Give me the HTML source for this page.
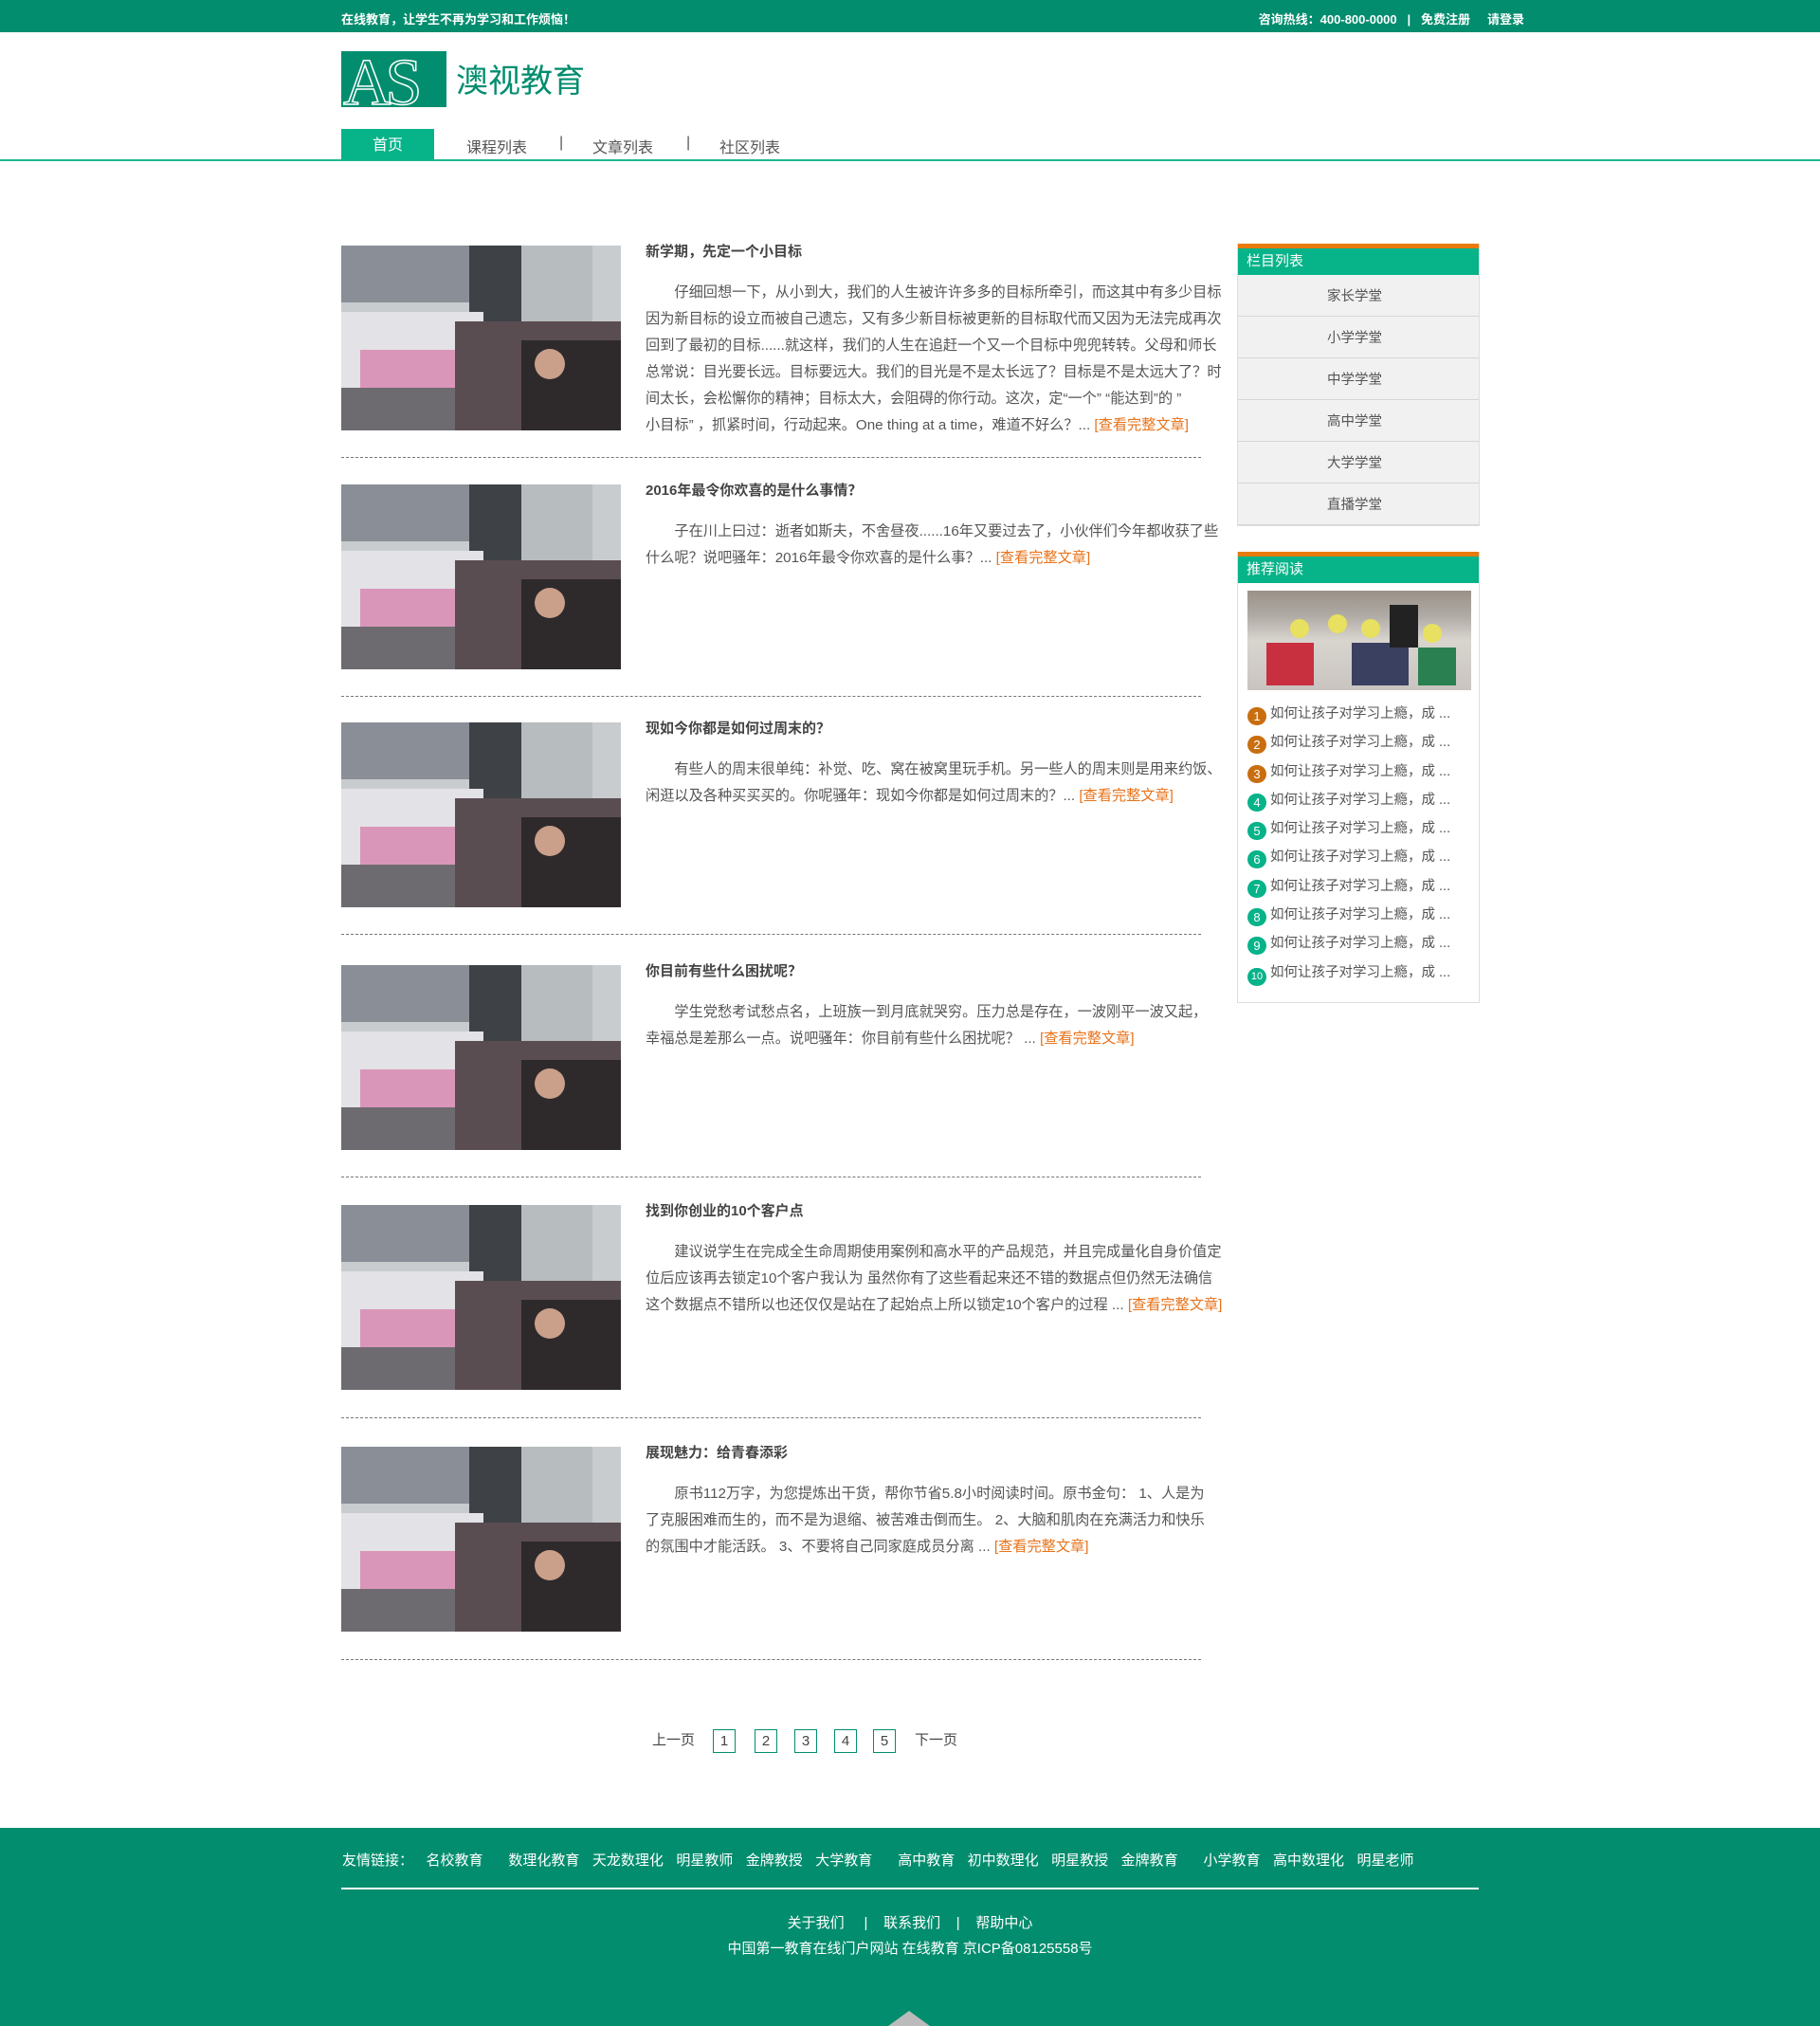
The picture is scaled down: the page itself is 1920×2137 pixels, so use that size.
<!DOCTYPE html>
<html><head><meta charset="utf-8">
<style>
*{margin:0;padding:0;box-sizing:border-box}
body{width:1920px;height:2137px;position:relative;background:#fff;font-family:"Liberation Sans","Noto Sans CJK SC",sans-serif;color:#555;overflow:hidden}
.top{position:absolute;left:0;top:0;width:1920px;height:34px;background:#028d6e;color:#fff;font-size:13px;font-weight:bold}
.top .l{position:absolute;left:360px;top:10px}
.top .r{position:absolute;right:312px;top:10px}
.logo{position:absolute;left:360px;top:54px;width:111px;height:59px;background:#028d6e;overflow:hidden}
.logo span{position:absolute;left:2px;top:-6px;font-family:"Liberation Serif",serif;font-size:70px;color:#028d6e;-webkit-text-stroke:1.5px #fff;letter-spacing:-6px}
.brand{position:absolute;left:481px;top:58px;font-size:34px;color:#028d6e}
.nav{position:absolute;left:0;top:168px;width:1920px;height:2px;background:#1db88d}
.nav1{position:absolute;left:360px;top:136px;width:98px;height:33px;background:#07b389;color:#fff;font-size:16px;text-align:center;line-height:36px}
.navi{position:absolute;top:142px;font-size:16px;color:#555}
.art{position:absolute;left:360px;width:925px}
.img{position:absolute;left:0;top:0;width:295px;height:195px;overflow:hidden}
.t{position:absolute;left:321px;top:-3px;font-size:15px;font-weight:bold;color:#444;line-height:20px}
.p{position:absolute;left:321px;top:36px;font-size:15.2px;line-height:28px;color:#555;white-space:nowrap}
.p a{color:#e8731a;text-decoration:none}
.dash{position:absolute;left:360px;width:907px;border-top:1px dashed #777}
.pg{position:absolute;top:1824px;font-size:15px;color:#444}
.pb{position:absolute;top:1824px;width:24px;height:25px;border:1px solid #028d6e;text-align:center;line-height:23px;font-size:15px;color:#444}
.sb{position:absolute;left:1305px;width:256px;border:1px solid #ddd;border-top:none}
.sbh{height:33px;background:#07b389;border-top:5px solid #e87b0c;color:#fff;font-size:15px;line-height:28px;padding-left:9px}
.it{height:44px;background:#f1f1f1;border-bottom:1px solid #d6d6d6;text-align:center;line-height:46px;font-size:14.5px;color:#555;text-indent:-8px}
.li{height:30.3px;font-size:14.5px;color:#555;line-height:30px;padding-left:10px;white-space:nowrap}
.n{display:inline-block;width:20px;height:19px;border-radius:10px;color:#fff;font-size:13px;line-height:19px;text-align:center;margin-right:4px;vertical-align:-3px}
.o{background:#c96e10}.g{background:#07b389}
.foot{position:absolute;left:0;top:1928px;width:1920px;height:209px;background:#028d6e;color:#fff;font-size:15px}
</style></head><body>
<div class="top"><span class="l">在线教育，让学生不再为学习和工作烦恼！</span><span class="r">咨询热线：400-800-0000 &nbsp;&nbsp;|&nbsp;&nbsp; 免费注册 &nbsp;&nbsp;&nbsp; 请登录</span></div>
<div class="logo"><span>AS</span></div>
<div class="brand">澳视教育</div>
<div class="nav"></div>
<div class="nav1">首页</div>
<div class="navi" style="left:492px">课程列表</div>
<div class="navi" style="left:590px">|</div>
<div class="navi" style="left:625px">文章列表</div>
<div class="navi" style="left:724px">|</div>
<div class="navi" style="left:759px">社区列表</div>

<svg width="0" height="0" style="position:absolute"><defs><g id="ph"><rect width="295" height="195" fill="#c9ccce"/><rect x="0" y="0" width="135" height="60" fill="#8a8e96"/><rect x="135" y="0" width="55" height="110" fill="#3e4246"/><rect x="190" y="0" width="75" height="110" fill="#b7bcbe"/><rect x="0" y="70" width="150" height="125" fill="#e3e2e6"/><rect x="0" y="150" width="295" height="45" fill="#6d6b70"/><rect x="120" y="80" width="175" height="115" fill="#5a4d52"/><rect x="190" y="100" width="105" height="95" fill="#2e2a2c"/><circle cx="220" cy="125" r="16" fill="#caa08a"/><rect x="20" y="110" width="100" height="40" fill="#d14a8a" opacity=".5"/></g></defs></svg>

<div class="art" style="top:259px"><div class="img"><svg width="295" height="195"><use href="#ph"/></svg></div><div class="t">新学期，先定一个小目标</div><div class="p">　　仔细回想一下，从小到大，我们的人生被许许多多的目标所牵引，而这其中有多少目标<br>因为新目标的设立而被自己遗忘，又有多少新目标被更新的目标取代而又因为无法完成再次<br>回到了最初的目标......就这样，我们的人生在追赶一个又一个目标中兜兜转转。父母和师长<br>总常说：目光要长远。目标要远大。我们的目光是不是太长远了？目标是不是太远大了？时<br>间太长，会松懈你的精神；目标太大，会阻碍的你行动。这次，定“一个” “能达到”的 ”<br>小目标” ，抓紧时间，行动起来。One thing at a time，难道不好么？... <a>[查看完整文章]</a></div></div>
<div class="dash" style="top:482px"></div>

<div class="art" style="top:511px"><div class="img"><svg width="295" height="195"><use href="#ph"/></svg></div><div class="t">2016年最令你欢喜的是什么事情？</div><div class="p">　　子在川上曰过：逝者如斯夫，不舍昼夜......16年又要过去了，小伙伴们今年都收获了些<br>什么呢？说吧骚年：2016年最令你欢喜的是什么事？... <a>[查看完整文章]</a></div></div>
<div class="dash" style="top:734px"></div>

<div class="art" style="top:762px"><div class="img"><svg width="295" height="195"><use href="#ph"/></svg></div><div class="t">现如今你都是如何过周末的？</div><div class="p">　　有些人的周末很单纯：补觉、吃、窝在被窝里玩手机。另一些人的周末则是用来约饭、<br>闲逛以及各种买买买的。你呢骚年：现如今你都是如何过周末的？... <a>[查看完整文章]</a></div></div>
<div class="dash" style="top:985px"></div>

<div class="art" style="top:1018px"><div class="img"><svg width="295" height="195"><use href="#ph"/></svg></div><div class="t">你目前有些什么困扰呢？</div><div class="p">　　学生党愁考试愁点名，上班族一到月底就哭穷。压力总是存在，一波刚平一波又起，<br>幸福总是差那么一点。说吧骚年：你目前有些什么困扰呢？ ... <a>[查看完整文章]</a></div></div>
<div class="dash" style="top:1241px"></div>

<div class="art" style="top:1271px"><div class="img"><svg width="295" height="195"><use href="#ph"/></svg></div><div class="t">找到你创业的10个客户点</div><div class="p">　　建议说学生在完成全生命周期使用案例和高水平的产品规范，并且完成量化自身价值定<br>位后应该再去锁定10个客户我认为 虽然你有了这些看起来还不错的数据点但仍然无法确信<br>这个数据点不错所以也还仅仅是站在了起始点上所以锁定10个客户的过程 ... <a>[查看完整文章]</a></div></div>
<div class="dash" style="top:1495px"></div>

<div class="art" style="top:1526px"><div class="img"><svg width="295" height="195"><use href="#ph"/></svg></div><div class="t">展现魅力：给青春添彩</div><div class="p">　　原书112万字，为您提炼出干货，帮你节省5.8小时阅读时间。原书金句： 1、人是为<br>了克服困难而生的，而不是为退缩、被苦难击倒而生。 2、大脑和肌肉在充满活力和快乐<br>的氛围中才能活跃。 3、不要将自己同家庭成员分离 ... <a>[查看完整文章]</a></div></div>
<div class="dash" style="top:1750px"></div>

<div class="pg" style="left:688px">上一页</div>
<div class="pb" style="left:752px">1</div>
<div class="pb" style="left:796px">2</div>
<div class="pb" style="left:838px">3</div>
<div class="pb" style="left:880px">4</div>
<div class="pb" style="left:921px">5</div>
<div class="pg" style="left:965px">下一页</div>

<div class="sb" style="top:257px">
<div class="sbh">栏目列表</div>
<div class="it">家长学堂</div><div class="it">小学学堂</div><div class="it">中学学堂</div><div class="it">高中学堂</div><div class="it">大学学堂</div><div class="it">直播学堂</div>
</div>
<div class="sb" style="top:582px;height:476px">
<div class="sbh">推荐阅读</div>
<div style="margin:8px 0 0 10px;width:236px;height:105px;background:linear-gradient(180deg,#9a9288 0%,#b0aaa5 25%,#d8d4ce 50%,#c9c4c0 100%);position:relative;overflow:hidden"><svg width="236" height="105"><circle cx="55" cy="40" r="10" fill="#e8e060"/><circle cx="95" cy="35" r="10" fill="#e8e060"/><circle cx="130" cy="40" r="10" fill="#e8e060"/><circle cx="195" cy="45" r="10" fill="#e8e060"/><rect x="20" y="55" width="50" height="45" fill="#c83040"/><rect x="110" y="55" width="60" height="45" fill="#3a4060"/><rect x="150" y="15" width="30" height="45" fill="#222"/><rect x="180" y="60" width="40" height="40" fill="#2a8050"/></svg></div>
<div style="margin-top:10px">
<div class="li"><span class="n o">1</span>如何让孩子对学习上瘾，成 ...</div>
<div class="li"><span class="n o">2</span>如何让孩子对学习上瘾，成 ...</div>
<div class="li"><span class="n o">3</span>如何让孩子对学习上瘾，成 ...</div>
<div class="li"><span class="n g">4</span>如何让孩子对学习上瘾，成 ...</div>
<div class="li"><span class="n g">5</span>如何让孩子对学习上瘾，成 ...</div>
<div class="li"><span class="n g">6</span>如何让孩子对学习上瘾，成 ...</div>
<div class="li"><span class="n g">7</span>如何让孩子对学习上瘾，成 ...</div>
<div class="li"><span class="n g">8</span>如何让孩子对学习上瘾，成 ...</div>
<div class="li"><span class="n g">9</span>如何让孩子对学习上瘾，成 ...</div>
<div class="li"><span class="n g" style="font-size:11px">10</span>如何让孩子对学习上瘾，成 ...</div>
</div></div>

<div class="foot">
<div style="position:absolute;left:361px;top:23px;word-spacing:9.3px">友情链接： 名校教育 &nbsp;数理化教育 天龙数理化 明星教师 金牌教授 大学教育 &nbsp;高中教育 初中数理化 明星教授 金牌教育 &nbsp;小学教育 高中数理化 明星老师</div>
<div style="position:absolute;left:360px;top:63px;width:1200px;height:2px;background:#fff"></div>
<div style="position:absolute;left:0;width:1920px;top:89px;text-align:center">关于我们 &nbsp;&nbsp;&nbsp;&nbsp;| &nbsp;&nbsp;&nbsp;联系我们 &nbsp;&nbsp;&nbsp;| &nbsp;&nbsp;&nbsp;帮助中心</div>
<div style="position:absolute;left:0;width:1920px;top:116px;text-align:center">中国第一教育在线门户网站 在线教育 京ICP备08125558号</div>
<div style="position:absolute;left:937px;top:193px;width:0;height:0;border-left:22px solid transparent;border-right:22px solid transparent;border-bottom:16px solid #bbb"></div>
</div>
</body></html>
